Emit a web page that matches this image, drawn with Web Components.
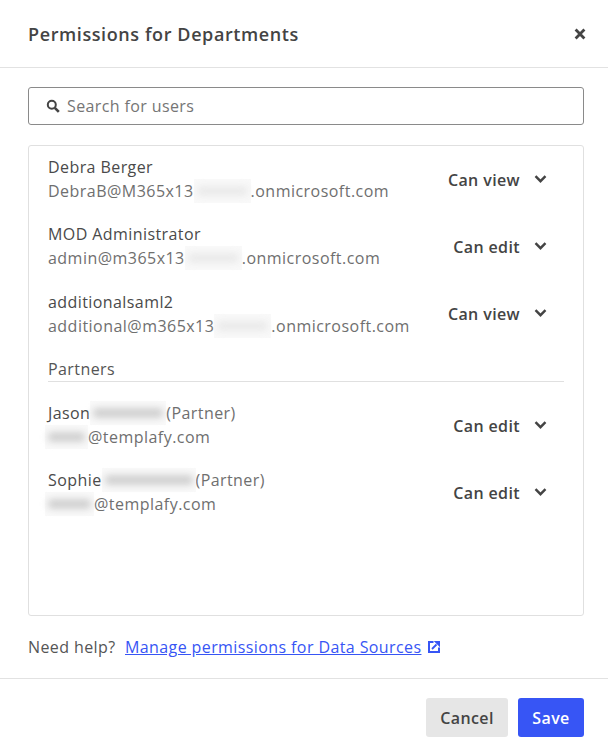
<!DOCTYPE html>
<html><head><meta charset="utf-8">
<style>html,body{margin:0;background:#fff}body{font-family:"Open Sans",sans-serif;color:#444}em{font-style:normal;color:#6f6f6f}</style>
</head><body>
<perm-dialog>
<user-row role="Can view"><span slot="name">Debra Berger</span><span slot="email">DebraB@M365x13<blur-mark w="57" tone="light"></blur-mark>.onmicrosoft.com</span></user-row>
<user-row role="Can edit"><span slot="name">MOD Administrator</span><span slot="email">admin@m365x13<blur-mark w="57" tone="light"></blur-mark>.onmicrosoft.com</span></user-row>
<user-row role="Can view" style="--role-top:1.2px"><span slot="name">additionalsaml2</span><span slot="email">additional@m365x13<blur-mark w="57" tone="light"></blur-mark>.onmicrosoft.com</span></user-row>
<section-head>Partners</section-head>
<user-row role="Can edit"><span slot="name">Jason<blur-mark w="76"></blur-mark><em>(Partner)</em></span><span slot="email"><blur-mark w="43" lead></blur-mark>@templafy.com</span></user-row>
<user-row role="Can edit"><span slot="name">Sophie<blur-mark w="94"></blur-mark><em>(Partner)</em></span><span slot="email"><blur-mark w="49" lead></blur-mark>@templafy.com</span></user-row>
</perm-dialog>
<script>
class BlurMark extends HTMLElement{constructor(){super();const w=this.getAttribute('w')||40;const light=this.getAttribute('tone')==='light';
this.attachShadow({mode:'open'}).innerHTML=`<style>:host{display:inline-block;width:${w}px;height:1em;vertical-align:-2px;position:relative;${this.hasAttribute('lead')?'margin-left:-3px;':''}}
b{position:absolute;inset:-4px 0;background:#f9f9f9}
i{position:absolute;inset:3px;background:${light?'#eaeaea':'#d0d0d0'};filter:blur(3.5px);border-radius:4px}</style><b></b><i></i>`}}
customElements.define('blur-mark',BlurMark);

class SectionHead extends HTMLElement{constructor(){super();this.attachShadow({mode:'open'}).innerHTML=`<style>:host{display:block;font-size:16px;letter-spacing:.42px;line-height:24px;color:#555;border-bottom:1px solid #e0e0e0;height:24px;margin:0 0 18.5px}</style><slot></slot>`}}
customElements.define('section-head',SectionHead);

class UserRow extends HTMLElement{constructor(){super();const role=this.getAttribute('role');
this.attachShadow({mode:'open'}).innerHTML=`<style>:host{display:flex;align-items:center;justify-content:space-between;height:48px;margin-bottom:19.5px}
.info{display:flex;flex-direction:column;font-size:16px;line-height:24px;letter-spacing:.42px}
.name{color:#4a4a4a}.email{color:#6f6f6f;letter-spacing:.47px}
::slotted(span){white-space:nowrap}
.role{display:flex;align-items:center;gap:14px;font-size:16px;letter-spacing:.38px;font-weight:600;color:#444;margin-right:17px;margin-top:var(--role-top,2.2px)}
svg{width:13px;height:10px;display:block;margin-top:-2px}</style>
<div class="info"><div class="name"><slot name="name"></slot></div><div class="email"><slot name="email"></slot></div></div>
<div class="role"><span>${role}</span><svg viewBox="0 0 13 10"><path d="M1.5 2.2 6.5 7.2 11.5 2.2" fill="none" stroke="#444" stroke-width="2.4"/></svg></div>`}}
customElements.define('user-row',UserRow);

class PermDialog extends HTMLElement{constructor(){super();
this.attachShadow({mode:'open'}).innerHTML=`<style>
:host{display:flex;flex-direction:column;width:608px;height:753px;box-sizing:border-box;font-family:"Open Sans",sans-serif}
header{height:67px;border-bottom:1px solid #e2e2e2;display:flex;align-items:center;justify-content:space-between;padding:0 22px 0 28px;flex:none}
h1{margin:0;font-size:18px;font-weight:600;color:#444;letter-spacing:.6px}
main{flex:1;padding:19px 24px 0 28px;display:flex;flex-direction:column}
.search{height:38px;box-sizing:border-box;border:1px solid #8a8a8a;border-radius:3px;display:flex;align-items:center;padding-left:17px;gap:7px;font-size:16px;letter-spacing:.38px;color:#757575}
.list{height:471px;box-sizing:border-box;margin-top:20px;border:1px solid #e0e0e0;border-radius:3px;padding:8.8px 19px 0}
.help{height:62px;display:flex;align-items:center;font-size:16px;letter-spacing:.4px;color:#555}
a{color:#3755f5;text-decoration:underline;margin-left:9.5px}
.help svg{margin-left:7px;width:12px;height:12px}
footer{flex:none;height:74px;border-top:1px solid #e2e2e2;padding:19px 24px 0 0;display:flex;justify-content:flex-end;gap:10px;align-items:flex-start}
button{font:600 16px "Open Sans",sans-serif;letter-spacing:.4px;height:39px;border:0;border-radius:3px;padding:0}
.c{width:82px;background:#e6e6e6;color:#444}.s{width:66px;background:#3755f5;color:#fff}
</style>
<header><h1>Permissions for Departments</h1>
<svg width="12" height="12" viewBox="0 0 12 12"><path d="M1.6 1.6 10.4 10.4M10.4 1.6 1.6 10.4" stroke="#444" stroke-width="2.8"/></svg></header>
<main>
<div class="search"><svg width="14" height="14" viewBox="0 0 14 14"><circle cx="5.8" cy="5.8" r="4" fill="none" stroke="#444" stroke-width="2"/><path d="M8.8 8.8 12.8 12.8" stroke="#444" stroke-width="2.6"/></svg><span>Search for users</span></div>
<div class="list"><slot></slot></div>
<div class="help"><span>Need help?</span><a>Manage permissions for Data Sources</a>
<svg viewBox="0 0 12 12"><path d="M5.5 1H1v10h10V6.500" fill="none" stroke="#3755f5" stroke-width="2"/><path d="M7 0h5v5zM4 8l4.500-4.500" fill="#3755f5" stroke="#3755f5" stroke-width="1.800"/></svg></div>
</main>
<footer><button class="c">Cancel</button><button class="s">Save</button></footer>`}}
customElements.define('perm-dialog',PermDialog);
</script>
</body></html>
